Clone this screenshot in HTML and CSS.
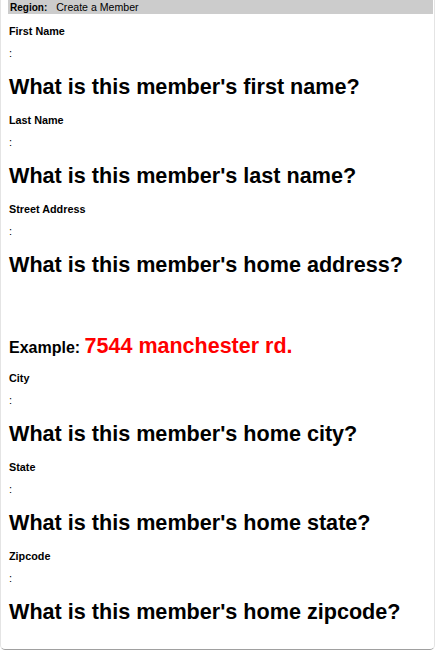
FILE: index.html
```html
<!DOCTYPE html>
<html>
<head>
<meta charset="utf-8">
<link rel="stylesheet" href="styles.css">
</head>
<body>
<div class="card">
  <div class="region"><b class="region-key">Region:</b><span class="region-value">Create a Member</span></div>
  <div class="form">
    <div class="field">
      <div class="label">First Name</div>
      <div class="colon">:</div>
      <div class="question">What is this member's first name?</div>
    </div>
    <div class="field">
      <div class="label">Last Name</div>
      <div class="colon">:</div>
      <div class="question">What is this member's last name?</div>
    </div>
    <div class="field">
      <div class="label">Street Address</div>
      <div class="colon">:</div>
      <div class="question">What is this member's home address?</div>
      <div class="example">Example: <span class="ex-value">7544 manchester rd.</span></div>
    </div>
    <div class="field">
      <div class="label">City</div>
      <div class="colon">:</div>
      <div class="question">What is this member's home city?</div>
    </div>
    <div class="field">
      <div class="label">State</div>
      <div class="colon">:</div>
      <div class="question">What is this member's home state?</div>
    </div>
    <div class="field">
      <div class="label">Zipcode</div>
      <div class="colon">:</div>
      <div class="question">What is this member's home zipcode?</div>
    </div>
  </div>
</div>
</body>
</html>
```

FILE: styles.css
```css
html, body {
  margin: 0;
  padding: 0;
  background: #fff;
}
body {
  font-family: "Liberation Sans", Arial, Helvetica, sans-serif;
  color: #000;
}
.card {
  width: 433px;
  height: 649px;
  border: 1px solid #e4e4e4;
  border-top: none;
  border-bottom: 1px solid #a0a0a0;
  border-radius: 0 0 5px 5px;
  box-sizing: content-box;
}
.region {
  margin-left: 7px;
  margin-right: 1px;
  height: 14px;
  line-height: 14px;
  background: #cccccc;
  padding-left: 2px;
  display: flex;
  align-items: baseline;
}
.region-key {
  font-size: 10px;
  font-weight: bold;
}
.region-value {
  font-size: 10.6px;
  margin-left: 9px;
}
.form {
  padding: 10px 8px 0 8px;
}
.field {
  display: flex;
  flex-direction: column;
  margin-bottom: 14px;
}
.label {
  font-size: 10.8px;
  font-weight: bold;
  line-height: 14px;
  height: 14px;
}
.colon {
  font-size: 11px;
  line-height: 14px;
  height: 14px;
  margin-top: 8px;
}
.question {
  font-size: 21.6px;
  font-weight: bold;
  line-height: 24px;
  margin-top: 15px;
}
.example {
  font-size: 16px;
  font-weight: bold;
  line-height: 24px;
  margin-top: 57px;
  margin-bottom: -3px;
}
.ex-value {
  color: #ff0000;
  font-size: 21.5px;
}
```
